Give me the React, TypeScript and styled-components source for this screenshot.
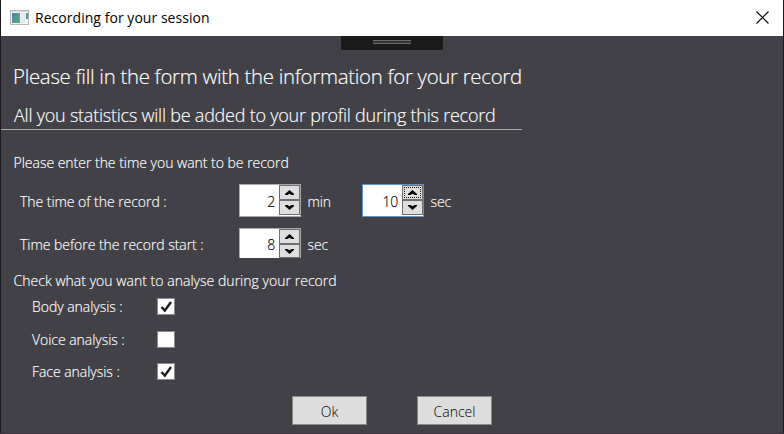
import React, { useState } from 'react';
import styled, { createGlobalStyle } from 'styled-components';

const GlobalStyle = createGlobalStyle`
  *, *::before, *::after { box-sizing: border-box; }
  body { margin: 0; background: #424147; }
`;

const Window = styled.div`
  display: flex;
  flex-direction: column;
  width: 784px;
  height: 434px;
  overflow: hidden;
  background: #424147;
  border: 1px solid #1d1b20;
  border-top: 0;
  border-bottom-color: #3b363d;
  color: #fff;
  font: 300 14px/20px "Open Sans", "Noto Sans", sans-serif;
  -webkit-text-stroke: 0.15px;
  white-space: nowrap;
`;

const TitleBar = styled.header`
  display: flex;
  align-items: center;
  flex: none;
  height: 36px;
  padding: 0 14px 0 9px;
  background: #fff;
  color: #000;
  -webkit-text-stroke: 0;
`;

const Title = styled.h1`
  flex: 1;
  margin: 0 0 0 5px;
  font-size: 14px;
  font-weight: 400;
  line-height: 20px;
  letter-spacing: 0.04px;
`;

const CloseButton = styled.button`
  display: flex;
  margin-top: -2px;
  padding: 0;
  border: 0;
  background: none;
`;

const Grip = styled.div`
  display: flex;
  justify-content: center;
  flex: none;
  width: 102px;
  height: 14px;
  margin-left: 340px;
  padding-top: 4px;
  background: #1b1b1b;
`;

const GripBars = styled.div`
  width: 38px;
  height: 4px;
  border: solid #6b6b6b;
  border-width: 1px 0;
  background: #333;
`;

const Intro = styled.div`
  flex: none;
  width: 521px;
  height: 80px;
  padding: 12px 0 0 12px;
  border-bottom: 1px solid #aaa9ac;
`;

const Heading = styled.p`
  margin: 0;
  font-size: 20.4px;
  line-height: 28px;
  letter-spacing: -0.29px;
`;

const SubHeading = styled.p`
  margin: 12px 0 0 1px;
  font-size: 18px;
  line-height: 26px;
  letter-spacing: -0.23px;
`;

const Section = styled.p<{ $top: number; $tracking: number }>`
  flex: none;
  margin: ${p => p.$top}px 0 0 12.5px;
  letter-spacing: ${p => p.$tracking}px;
`;

const FieldRow = styled.div<{ $top: number; $height: number }>`
  display: grid;
  grid-template-columns: 219px 62px 61px 62px auto;
  flex: none;
  height: ${p => p.$height}px;
  margin: ${p => p.$top}px 0 0 19px;
`;

const Label = styled.span<{ $top: number }>`
  padding-top: ${p => p.$top}px;
  letter-spacing: -0.04px;
`;

const Unit = styled(Label)`
  padding-left: 6.6px;
  letter-spacing: -0.2px;
`;

const SpinBox = styled.div<{ $focused: boolean; $clipped: boolean }>`
  display: grid;
  grid-template-columns: 1fr 21px;
  border: 1px solid ${p => (p.$focused ? '#5f93cc' : '#aaa9b0')};
  border-bottom-width: ${p => (p.$clipped ? 0 : 1)}px;
  background: #fff;
  color: #000;
`;

const Value = styled.span<{ $top: number }>`
  padding: ${p => p.$top}px 4px 0 0;
  text-align: right;
  letter-spacing: -0.2px;
`;

const Steppers = styled.div<{ $clipped: boolean }>`
  display: grid;
  grid-template-rows: 15px 1fr;
  padding-bottom: ${p => (p.$clipped ? 0 : 1)}px;
`;

const Step = styled.button<{ $focused?: boolean }>`
  display: flex;
  align-items: center;
  justify-content: center;
  min-height: 0;
  padding: 0;
  border: 1px solid #6e6e6e;
  background: #dedede;
  outline: ${p => (p.$focused ? '1px dotted #111' : '0')};
  outline-offset: -3px;
`;

const CheckRow = styled.div<{ $top: number }>`
  display: grid;
  grid-template-columns: 125px 18px;
  flex: none;
  height: 20px;
  margin: ${p => p.$top}px 0 0 31px;
`;

const CheckBox = styled.button`
  display: flex;
  width: 18px;
  height: 17px;
  margin-top: 1px;
  padding: 0;
  border: 1px solid #8b8a8e;
  background: #fff;
`;

const Actions = styled.footer`
  display: flex;
  gap: 50px;
  flex: none;
  margin: 14px 0 0 291px;
`;

const ActionButton = styled.button`
  width: 75px;
  height: 29px;
  padding: 2px 0 0;
  border: 1px solid #8a8a8a;
  background: #dddddd;
  color: #000;
  font: 300 14px/20px "Open Sans", "Noto Sans", sans-serif;
  -webkit-text-stroke: 0;
`;

const AppIcon = () => (
  <svg width="20" height="16" viewBox="0 0 20 16">
    <defs>
      <linearGradient id="pane" x1="0" y1="0" x2="1" y2="1">
        <stop offset="0" stopColor="#4b7fa5" />
        <stop offset="1" stopColor="#5dab83" />
      </linearGradient>
    </defs>
    <rect x="0.5" y="0.5" width="18" height="14" fill="#f4f5f7" stroke="#b4b8bd" />
    <path d="M1 1.5h17" stroke="#d9dce0" />
    <rect x="2" y="3" width="8" height="10" fill="url(#pane)" />
    <rect x="11" y="3" width="4" height="10" fill="#e6e9ec" />
    <rect x="16" y="3" width="2" height="6" fill="#5c9c96" />
  </svg>
);

const Arrow = ({ down = false }: { down?: boolean }) => (
  <svg width="9" height="5" viewBox="0 0 9 5">
    <path d={down ? 'M0 0h2.5L4.5 1.2L6.5 0H9v1L4.5 5L0 1z' : 'M0 5h2.5L4.5 3.8L6.5 5H9V4L4.5 0L0 4z'} fill="#000" />
  </svg>
);

type SpinnerProps = { initial: number; textTop: number; focused?: boolean; clipped?: boolean };

function Spinner({ initial, textTop, focused = false, clipped = false }: SpinnerProps) {
  const [value, setValue] = useState(initial);
  return (
    <SpinBox $focused={focused} $clipped={clipped}>
      <Value $top={textTop}>{value}</Value>
      <Steppers $clipped={clipped}>
        <Step $focused={focused} onClick={() => setValue(value + 1)}><Arrow /></Step>
        <Step onClick={() => setValue(Math.max(0, value - 1))}><Arrow down /></Step>
      </Steppers>
    </SpinBox>
  );
}

function CheckField({ label, top, initial }: { label: string; top: number; initial: boolean }) {
  const [checked, setChecked] = useState(initial);
  return (
    <CheckRow $top={top}>
      <Label $top={0}>{label}</Label>
      <CheckBox role="checkbox" aria-checked={checked} aria-label={label} onClick={() => setChecked(!checked)}>
        {checked && (
          <svg width="16" height="15" viewBox="0 0 16 15">
            <path d="M3.5 8L6.8 11.6L13 3" fill="none" stroke="#1c1c1c" strokeWidth="2.4" />
          </svg>
        )}
      </CheckBox>
    </CheckRow>
  );
}

export default function App() {
  return (
    <Window>
      <GlobalStyle />
      <TitleBar>
        <AppIcon />
        <Title>Recording for your session</Title>
        <CloseButton aria-label="Close">
          <svg width="13" height="13" viewBox="0 0 13 13">
            <path d="M0.5 0.5L12.5 12.5M12.5 0.5L0.5 12.5" stroke="#000" strokeWidth="1.1" />
          </svg>
        </CloseButton>
      </TitleBar>
      <Grip><GripBars /></Grip>
      <Intro>
        <Heading>Please fill in the form with the information for your record</Heading>
        <SubHeading>All you statistics will be added to your profil during this record</SubHeading>
      </Intro>
      <Section $top={23} $tracking={-0.02}>Please enter the time you want to be record</Section>
      <FieldRow $top={11} $height={33}>
        <Label $top={8}>The time of the record :</Label>
        <Spinner initial={2} textTop={7} />
        <Unit $top={8}>min</Unit>
        <Spinner initial={10} textTop={7} focused />
        <Unit $top={8}>sec</Unit>
      </FieldRow>
      <FieldRow $top={11} $height={30}>
        <Label $top={7}>Time before the record start :</Label>
        <Spinner initial={8} textTop={6} clipped />
        <Unit $top={7}>sec</Unit>
      </FieldRow>
      <Section $top={13} $tracking={0.03}>Check what you want to analyse during your record</Section>
      <CheckField label="Body analysis :" top={6} initial />
      <CheckField label="Voice analysis :" top={13} initial={false} />
      <CheckField label="Face analysis :" top={12} initial />
      <Actions>
        <ActionButton>Ok</ActionButton>
        <ActionButton>Cancel</ActionButton>
      </Actions>
    </Window>
  );
}
